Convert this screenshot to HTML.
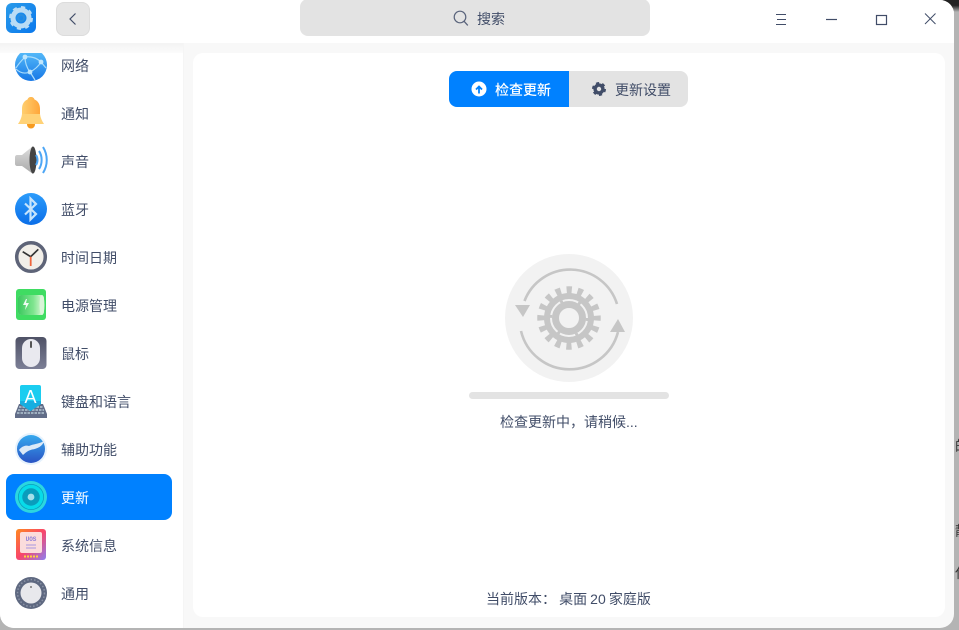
<!DOCTYPE html>
<html lang="zh"><head><meta charset="utf-8"><style>
*{box-sizing:border-box}
html,body{margin:0;padding:0;width:959px;height:630px;overflow:hidden;background:#b4b4b4;font-family:"Liberation Sans","Noto Sans CJK SC",sans-serif;font-size:14px;color:#414d68}
#corner{position:absolute;left:940px;top:0;width:19px;height:12px;background:linear-gradient(#222 45%,#b4b4b4)}
.frag{position:absolute;left:955px;width:4px;height:16px;overflow:hidden;color:#333;line-height:16px;white-space:nowrap}
#win{position:absolute;left:0;top:0;width:954px;height:628px;background:#f8f8f8;border-radius:0 14px 14px 14px;overflow:hidden}
#title{position:absolute;left:0;top:0;width:954px;height:43px;background:#fff}
#side{position:absolute;left:0;top:43px;width:183px;height:585px;background:#fff;overflow:hidden}
#fade{position:absolute;left:0;top:0;width:183px;height:10px;background:linear-gradient(#f3f3f3,#fbfbfb);z-index:3}
.it{position:absolute;left:0;width:183px;height:46px}
.it svg{position:absolute;left:15px;top:6px;width:32px;height:32px;overflow:visible}
.it span{position:absolute;left:61px;top:0;line-height:47px;white-space:nowrap}
.sel{position:absolute;left:6px;top:431px;width:166px;height:46px;background:#0081ff;border-radius:8px}
#card{position:absolute;left:193px;top:53px;width:752px;height:564px;background:#fff;border-radius:10px}
.abs{position:absolute}
</style></head><body>
<div id="corner"></div>
<div class="frag" style="top:438px">的</div>
<div class="frag" style="top:523px">静</div>
<div class="frag" style="top:565px">任</div>
<div id="win">
<div id="title">
<svg class="abs" style="left:6px;top:3px" width="30" height="30" viewBox="0 0 30 30"><defs><linearGradient id="a" x1="0" y1="0" x2="1" y2="1"><stop offset="0" stop-color="#2a9bea"/><stop offset="1" stop-color="#0a78ec"/></linearGradient></defs><rect width="30" height="30" rx="6" fill="url(#a)"/><circle cx="15" cy="15" r="8" fill="none" stroke="#b9dcf5" stroke-width="5"/><circle cx="15" cy="15" r="10.5" fill="none" stroke="#b9dcf5" stroke-width="3" stroke-dasharray="4 4.2"/><circle cx="15" cy="15" r="3" fill="none" stroke="#2a8ee0" stroke-width="2"/></svg>
<div class="abs" style="left:56px;top:2px;width:34px;height:34px;background:#e6e6e6;border:1px solid #dcdcdc;border-radius:8px"></div>
<svg class="abs" style="left:66px;top:12px" width="14" height="14" viewBox="0 0 14 14"><path d="M9.5 1.500 4 7l5.500 5.500" fill="none" stroke="#414d68" stroke-width="1.200"/></svg>
<div class="abs" style="left:300px;top:-1px;width:350px;height:37px;background:#e3e3e3;border-radius:8px"></div>
<svg class="abs" style="left:452px;top:10px" width="18" height="17" viewBox="0 0 18 17"><circle cx="8" cy="7" r="5.800" fill="none" stroke="#5a647c" stroke-width="1.200"/><path d="M12 11.200l3.800 4.200" stroke="#5a647c" stroke-width="1.300"/></svg>
<span class="abs" style="left:477px;top:0;line-height:39px">搜索</span>
<svg class="abs" style="left:770px;top:10px" width="180" height="20" viewBox="0 0 180 20"><g stroke="#414d68" fill="none" stroke-width="1"><path d="M6 4.500h10M7 9.500h9M6 14.500h10"/><path d="M56 9.500h11" stroke-width="1.200"/><rect x="106.500" y="5.500" width="10" height="9" stroke-width="1.200"/><path d="M155 3.500l10.500 10.500M165.500 3.500 155 14"/></g></svg>
</div>
<div id="side"><div id="fade"></div>
<div class="sel"></div>
<div class="it" style="top:0"><svg viewBox="0 0 32 32"><defs><linearGradient id="n" x1="0" y1="0" x2="0" y2="1"><stop offset="0" stop-color="#5cc1fb"/><stop offset="1" stop-color="#1677e6"/></linearGradient></defs><circle cx="16" cy="16" r="16" fill="url(#n)"/><path d="M10 8C16 7 22 9 26 13M10 8C10 14 12 19 15 23M26 13C23 18 19 21 15 23M10 8C7 11 4 14 1 19M26 13 31 19M15 23C10 25 5 24 1 20M15 23 20 31" fill="none" stroke="#a9dcfb" stroke-width="1.200"/><circle cx="10" cy="8" r="2.400" fill="#bfe6fd"/><circle cx="26" cy="13" r="2.400" fill="#bfe6fd"/><circle cx="15" cy="23" r="2.400" fill="#bfe6fd"/></svg><span>网络</span></div>
<div class="it" style="top:48px"><svg viewBox="0 0 32 32"><defs><linearGradient id="b" x1="0" y1="0" x2="1" y2="0"><stop offset="0" stop-color="#ffcf70"/><stop offset="1" stop-color="#ffa63a"/></linearGradient></defs><circle cx="16" cy="27.500" r="4" fill="#f79a1e"/><path d="M16 0c2 0 3 1 3.500 2.500C23 4 25 7 25 12v5H7v-5c0-5 2-8 5.500-9.500C13 1 14 0 16 0z" fill="url(#b)"/><path d="M7 17h18c.5 4 2 7 4 10H3c2-3 3.500-6 4-10z" fill="#ffd277"/></svg><span>通知</span></div>
<div class="it" style="top:96px"><svg viewBox="0 0 32 32"><defs><linearGradient id="s" x1="0" y1="0" x2="0" y2="1"><stop offset="0" stop-color="#dedede"/><stop offset="1" stop-color="#a8a8a8"/></linearGradient></defs><path d="M0 12c0-1 1-2 2-2h5L18 1v28L7 21H2c-1 0-2-1-2-2z" fill="url(#s)"/><ellipse cx="18" cy="15" rx="3.500" ry="13.500" fill="#444"/><path d="M21 10c2 3 2 7 0 10M24 6c3.500 5 3.500 13 0 18M28 2c5 8 5 18 0 26" fill="none" stroke="#4da6f5" stroke-width="2"/></svg><span>声音</span></div>
<div class="it" style="top:144px"><svg viewBox="0 0 32 32"><defs><linearGradient id="bt" x1="0" y1="0" x2="0" y2="1"><stop offset="0" stop-color="#2c9cfb"/><stop offset="1" stop-color="#0b6ee8"/></linearGradient></defs><circle cx="16" cy="16" r="16" fill="url(#bt)"/><path d="M10 10.500 21 21l-5.500 5.500V5.500L21 11 10 21.500" fill="none" stroke="#c7e4fc" stroke-width="2.200"/></svg><span>蓝牙</span></div>
<div class="it" style="top:192px"><svg viewBox="0 0 32 32"><circle cx="16" cy="16" r="14.300" fill="#f2efe9" stroke="#5e6478" stroke-width="3.500"/><path d="M15.700 15.700 7.700 10.700M15.700 15.700 23.300 8.300" stroke="#333" stroke-width="1.700"/><path d="M15.700 15.700V25" stroke="#f0663c" stroke-width="1.800"/></svg><span>时间日期</span></div>
<div class="it" style="top:240px"><svg viewBox="0 0 32 32"><defs><linearGradient id="p" x1="0" y1="0" x2="1" y2="0"><stop offset="0" stop-color="#3ac85e"/><stop offset=".7" stop-color="#7fe58f"/><stop offset="1" stop-color="#bdf2bf"/></linearGradient></defs><rect x="1" y="0" width="30" height="31" rx="3" fill="#3fdc62"/><rect x="3" y="6" width="26" height="20" rx="3" fill="#c7f3c5"/><rect x="3" y="6" width="22" height="20" rx="3" fill="url(#p)"/><path d="M11 10l-3 6h3l-1 5 4-7h-3l1-4z" fill="#fff" opacity=".9"/><ellipse cx="27" cy="16" rx="2.500" ry="10" fill="#d9f5d8"/></svg><span>电源管理</span></div>
<div class="it" style="top:288px"><svg viewBox="0 0 32 32"><defs><linearGradient id="m" x1="0" y1="0" x2="0" y2="1"><stop offset="0" stop-color="#4f5266"/><stop offset="1" stop-color="#7c7f96"/></linearGradient></defs><rect x="0.500" y="0" width="31" height="32" rx="4" fill="url(#m)"/><rect x="7" y="2" width="18" height="28" rx="9" fill="#e9e9ef"/><rect x="15" y="4" width="2" height="7" rx="1" fill="#555"/></svg><span>鼠标</span></div>
<div class="it" style="top:336px"><svg viewBox="0 0 32 32"><path d="M4 19h24l4 10v4H0v-4z" fill="#626d88"/><g fill="none" stroke="#9fb0c0" stroke-width="2" stroke-dasharray="2.500 1"><path d="M4 22h24M3 25h26M2 28h28"/></g><path d="M5 2q0-2 2-2h17q2 0 2 2v17l-10.500 7L5 19z" fill="#1bcdf0"/><path d="M5 16h21v3l-10.500 7L5 19z" fill="#16aee0"/><text x="15.500" y="18" text-anchor="middle" font-size="18" fill="#fff" font-family="Liberation Sans">A</text></svg><span>键盘和语言</span></div>
<div class="it" style="top:384px"><svg viewBox="0 0 32 32"><defs><linearGradient id="h" x1="0" y1="0" x2="0" y2="1"><stop offset="0" stop-color="#36a9ee"/><stop offset="1" stop-color="#2a53c4"/></linearGradient></defs><circle cx="16" cy="16" r="16" fill="#d5e9fb" opacity=".6"/><circle cx="16" cy="16" r="14" fill="url(#h)"/><path d="M4 17C7 13 11 12 14 13C18 11 24 11 29 8C28 13 22 16 17 16.500C13 17.500 10 20 8 22z" fill="#dce9f7"/></svg><span>辅助功能</span></div>
<div class="it" style="top:432px"><svg viewBox="0 0 32 32"><circle cx="16" cy="16" r="16" fill="#2cd6df"/><circle cx="16" cy="16" r="13" fill="#0a9cbc"/><circle cx="16" cy="16" r="10.500" fill="none" stroke="#07dbe9" stroke-width="3.500"/><circle cx="16" cy="16" r="3.400" fill="#a5dfea"/></svg><span style="color:#fff">更新</span></div>
<div class="it" style="top:480px"><svg viewBox="0 0 32 32"><defs><linearGradient id="y" x1="0" y1="0" x2="1" y2="1"><stop offset="0" stop-color="#ff8a1e"/><stop offset=".5" stop-color="#f9456a"/><stop offset="1" stop-color="#8d7ff0"/></linearGradient></defs><rect x="1" y="0" width="30" height="31" rx="3" fill="url(#y)"/><rect x="5" y="3" width="22" height="21" rx="2" fill="#fbdcdc"/><text x="16" y="12" text-anchor="middle" font-size="6" fill="#8f7fd8" font-family="Liberation Mono" font-weight="bold">UOS</text><path d="M11 16h10M11 19h10" stroke="#a797e0"/><path d="M9 27.500h14" stroke="#ffd23c" stroke-width="2" stroke-dasharray="2 1"/></svg><span>系统信息</span></div>
<div class="it" style="top:528px"><svg viewBox="0 0 32 32"><circle cx="16" cy="16" r="16" fill="#5e6880"/><circle cx="16" cy="16" r="13.500" fill="none" stroke="#8b93a6" stroke-width="1.500" stroke-dasharray="1.500 2"/><circle cx="16" cy="16" r="10.500" fill="#e8e8ec"/><circle cx="16" cy="10" r="1" fill="#777"/></svg><span>通用</span></div>
</div>
<div class="abs" style="left:183px;top:43px;width:1px;height:585px;background:#f5f5f5"></div>
<div id="card"></div>
<div class="abs" style="left:449px;top:71px;width:120px;height:36px;background:#0081ff;border-radius:8px 0 0 8px"></div>
<div class="abs" style="left:569px;top:71px;width:119px;height:36px;background:#e3e3e3;border-radius:0 8px 8px 0"></div>
<svg class="abs" style="left:471px;top:81px" width="16" height="16" viewBox="0 0 16 16"><circle cx="8" cy="8" r="7.500" fill="#fff"/><path d="M8 12.500V6M5 8.500l3-3 3 3" fill="none" stroke="#0081ff" stroke-width="1.800"/></svg>
<span class="abs" style="left:495px;top:72px;line-height:36px;color:#fff;font-weight:500">检查更新</span>
<svg class="abs" style="left:591px;top:81px" width="16" height="16" viewBox="0 0 16 16"><circle cx="8" cy="8" r="3.900" fill="none" stroke="#414d68" stroke-width="3.400"/><circle cx="8" cy="8" r="5.800" fill="none" stroke="#414d68" stroke-width="2.400" stroke-dasharray="3 3.070"/></svg>
<span class="abs" style="left:615px;top:72px;line-height:36px">更新设置</span>
<svg class="abs" style="left:505px;top:254px" width="128" height="128" viewBox="0 0 128 128"><circle cx="64" cy="64" r="64" fill="#f2f2f2"/><g fill="none" stroke="#c6c6c6"><circle cx="64" cy="64" r="13.500" stroke-width="7"/><circle cx="64" cy="64" r="22" stroke-width="6"/><circle cx="64" cy="64" r="18" stroke-width="2.400" stroke-dasharray="3 15.850"/><circle cx="64" cy="64" r="28" stroke-width="7.500" stroke-dasharray="5.200 5.796" stroke-dashoffset="2.600"/><path d="M19.500 47A49 49 0 0 1 112 50" stroke-width="2.600"/><path d="M16 77A50 50 0 0 0 113 78" stroke-width="2.600"/></g><g fill="#c6c6c6"><path d="M10 51h15l-7 12z"/><path d="M113 65l7 13h-15z"/></g></svg>
<div class="abs" style="left:469px;top:392px;width:200px;height:7px;background:#e3e3e3;border-radius:4px"></div>
<span class="abs" style="left:500px;top:411px;line-height:22px;white-space:nowrap">检查更新中，请稍候...</span>
<span class="abs" style="left:486px;top:588px;line-height:22px;white-space:pre;word-spacing:-.8px">当前版本： 桌面 20 家庭版</span>
</div>
</body></html>
